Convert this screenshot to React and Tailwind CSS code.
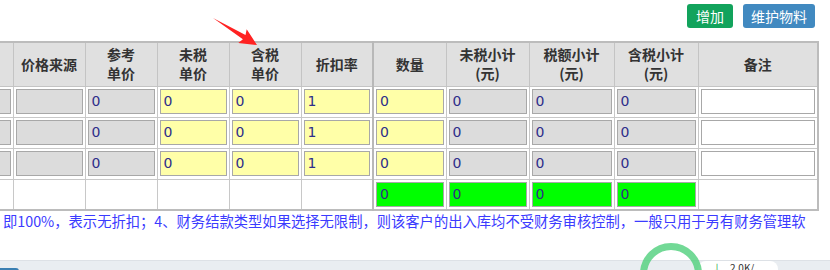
const heads = [
    { t: '额度', w: 'w-[72px]' },
    { t: '价格来源', w: 'w-[72px]' },
    { t: ['参考', '单价'], w: 'w-[72px]' },
    { t: ['未税', '单价'], w: 'w-[72px]' },
    { t: ['含税', '单价'], w: 'w-[72px]' },
    { t: '折扣率', w: 'w-[72px]' },
    { t: '数量', w: 'w-[73px]', split: true },
    { t: ['未税小计', '(元)'], w: 'w-[83px]' },
    { t: ['税额小计', '(元)'], w: 'w-[85px]' },
    { t: ['含税小计', '(元)'], w: 'w-[84px]' },
    { t: '备注', w: 'w-[120px]' },
];

// kind: g = readonly gray, y = editable yellow, w = white
const rowCells = [
    ['g', ''], ['g', ''], ['g', '0'], ['y', '0'], ['y', '0'], ['y', '1'],
    ['y', '0'], ['g', '0'], ['g', '0'], ['g', '0'], ['w', ''],
];

const inputBg = {
    g: 'bg-[#dcdcdc]',
    y: 'bg-[#ffffa8]',
    w: 'bg-white',
    n: 'bg-[#00ff00]',
};

function Box({ kind, value }) {
    return (
        <div
            className={`flex h-[25px] w-full items-center border border-[#a8a8a8] pl-[3px] text-[14px] text-[#2e2e8a] ${inputBg[kind]}`}
            style={{ fontFamily: '"DejaVu Sans", Verdana, sans-serif' }}
        >
            {value}
        </div>
    );
}

export default function App() {
    return (
        <div
            className="relative h-[270px] w-[830px] overflow-hidden bg-white"
            style={{ fontFamily: '"Noto Sans CJK SC", "Noto Sans", sans-serif' }}
        >
            <div className="flex h-[41px] items-start justify-end gap-[10px] pr-[15px] pt-[4px]">
                <button className="h-[24px] rounded-[3px] bg-[#12a35c] px-[9px] text-[14px] leading-[24px] text-white">
                    增加
                </button>
                <button className="h-[24px] rounded-[3px] bg-[#4189c0] px-[8px] text-[14px] leading-[24px] text-white">
                    维护物料
                </button>
            </div>

            <table className="-ml-[60px] table-fixed border-collapse border-2 border-[#bcbcbc]" style={{ width: 877 }}>
                <colgroup>
                    {heads.map((h, i) => (
                        <col key={i} className={h.w} />
                    ))}
                </colgroup>
                <thead>
                    <tr className="h-[44px] bg-[#e0e0e0]">
                        {heads.map((h, i) => (
                            <th
                                key={i}
                                className={`border border-[#c4c4c4] p-0 text-center text-[14px] font-bold leading-[19px] text-[#333] ${
                                    h.split ? 'border-l-2 border-l-[#b8b8b8]' : ''
                                }`}
                            >
                                {Array.isArray(h.t) ? (
                                    <>
                                        {h.t[0]}
                                        <br />
                                        {h.t[1]}
                                    </>
                                ) : (
                                    h.t
                                )}
                            </th>
                        ))}
                    </tr>
                </thead>
                <tbody>
                    {[0, 1, 2].map((r) => (
                        <tr key={r} className="h-[31px]">
                            {rowCells.map(([kind, value], i) => (
                                <td
                                    key={i}
                                    className={`border border-[#c8c8c8] px-[2px] py-0 ${
                                        heads[i].split ? 'border-l-2 border-l-[#b8b8b8]' : ''
                                    }`}
                                >
                                    <Box kind={kind} value={value} />
                                </td>
                            ))}
                        </tr>
                    ))}
                    <tr className="h-[31px]">
                        {heads.map((h, i) => (
                            <td
                                key={i}
                                className={`border border-[#c8c8c8] px-[2px] py-0 ${
                                    h.split ? 'border-l-2 border-l-[#b8b8b8]' : ''
                                }`}
                            >
                                {i >= 6 && i <= 9 && <Box kind="n" value="0" />}
                            </td>
                        ))}
                    </tr>
                </tbody>
            </table>

            <p className="whitespace-nowrap pl-[3px] text-[14.3px] leading-[20px] text-[#3b3bff]">
                即100%，表示无折扣；4、财务结款类型如果选择无限制，则该客户的出入库均不受财务审核控制，一般只用于另有财务管理软
            </p>

            <div className="mt-[29px] h-[12px] border-t border-[#dde1e6] bg-[#e9edf1]">
                <div className="flex h-full items-end">
                    <div className="h-[4px] w-[19px] rounded-tr-[3px] bg-[#3a7fb2]" />
                    <div className="ml-auto mr-[52px] flex h-[11px] w-[80px] items-start gap-[8px] rounded-t-[8px] bg-white pl-[14px] text-[10px] leading-[14px] text-[#333]">
                        <span className="text-[#2aa84a]">↓</span>
                        <span>2.0K/</span>
                    </div>
                </div>
            </div>

            {/* red annotation arrow */}
            <svg className="pointer-events-none absolute left-0 top-0" width="830" height="270">
                <polygon
                    points="213,18 245.5,35.1 246.7,29.3 257,45 238.3,42.9 242.9,39.3"
                    fill="#ff2222"
                />
            </svg>

            {/* floating green ring */}
            <div className="pointer-events-none absolute left-[640px] top-[243px] h-[62px] w-[62px] rounded-full border-[7px] border-[#4fd07c]/80" />
        </div>
    );
}
